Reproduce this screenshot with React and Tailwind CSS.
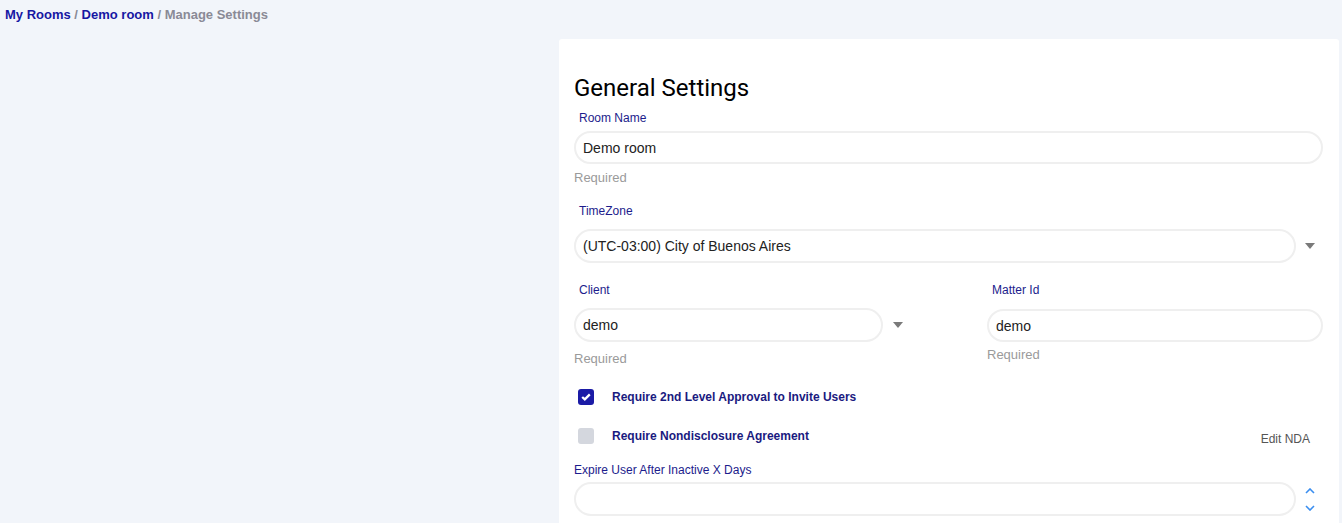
import React from 'react';

const label = "text-[12px] leading-[16px] text-[#1c1c8c]";
const input =
  "rounded-full border-2 border-[#efefef] bg-white px-[7px] text-[14px] text-[#222] outline-none";
const hint = "text-[13px] leading-[18px] text-[#9a9a9a]";

const Caret = () => (
  <svg width="10" height="6" viewBox="0 0 10 6">
    <path d="M0 0 H10 L5 6 Z" fill="#7a7a7a" />
  </svg>
);

const Spinner = () => (
  <div className="flex flex-col items-center gap-[11px]">
    <svg width="10" height="6" viewBox="0 0 10 6" fill="none">
      <path d="M1 5 L5 1 L9 5" stroke="#3a8ef0" strokeWidth="1.6" />
    </svg>
    <svg width="10" height="6" viewBox="0 0 10 6" fill="none">
      <path d="M1 1 L5 5 L9 1" stroke="#3a8ef0" strokeWidth="1.6" />
    </svg>
  </div>
);

export default function App() {
  return (
    <div className="min-h-screen bg-[#f2f5fa] font-['Liberation_Sans',Arial,sans-serif]">
      {/* Breadcrumb */}
      <div className="pl-[5px] pt-[6px] text-[13px] font-bold leading-[18px] text-[#8a8a96]">
        <span className="text-[#1717a3]">My Rooms</span> /{' '}
        <span className="text-[#1717a3]">Demo room</span> / Manage Settings
      </div>

      <div className="flex">
        <div className="w-[559px] shrink-0" />
        <div className="mt-[15px] w-[780px] rounded-[3px] bg-white pb-[20px] pl-[15px] pr-[16px] pt-[35px]">
          <h1 className="font-['Roboto',sans-serif] text-[24px] leading-[28px] text-black">
            General Settings
          </h1>

          {/* Room name */}
          <div className={`${label} mt-[8px] pl-[5px]`}>Room Name</div>
          <input className={`${input} mt-[5px] h-[33px] w-full`} defaultValue="Demo room" />
          <div className={`${hint} mt-[5px]`}>Required</div>

          {/* Time zone */}
          <div className={`${label} mt-[16px] pl-[5px]`}>TimeZone</div>
          <div className="mt-[10px] flex items-center">
            <div className={`${input} flex h-[34px] w-full items-center`}>
              (UTC-03:00) City of Buenos Aires
            </div>
            <div className="flex w-[27px] shrink-0 justify-center">
              <Caret />
            </div>
          </div>

          {/* Client / Matter */}
          <div className="mt-[19px] flex">
            <div className="w-[413px] shrink-0">
              <div className={`${label} pl-[5px]`}>Client</div>
              <div className="mt-[10px] flex items-center">
                <div className={`${input} flex h-[34px] w-[309px] items-center`}>demo</div>
                <div className="flex w-[30px] shrink-0 justify-center">
                  <Caret />
                </div>
              </div>
              <div className={`${hint} mt-[8px]`}>Required</div>
            </div>
            <div className="flex-1">
              <div className={`${label} pl-[5px]`}>Matter Id</div>
              <input className={`${input} mt-[11px] h-[33px] w-full`} defaultValue="demo" />
              <div className={`${hint} mt-[4px]`}>Required</div>
            </div>
          </div>

          {/* Checkboxes */}
          <div className="mt-[21px] flex items-start pl-[4px]">
            <div className="flex h-[16px] w-[16px] items-center justify-center rounded-[3px] bg-[#1b1ba6]">
              <svg width="10" height="8" viewBox="0 0 10 8" fill="none">
                <path d="M1.2 4 L3.8 6.4 L8.8 1.4" stroke="white" strokeWidth="2.3" />
              </svg>
            </div>
            <span className="ml-[18px] text-[12px] font-bold leading-[16px] text-[#1a1a80]">
              Require 2nd Level Approval to Invite Users
            </span>
          </div>
          <div className="mt-[23px] flex items-start pl-[4px]">
            <div className="h-[16px] w-[16px] rounded-[3px] bg-[#d4d7de]" />
            <span className="ml-[18px] text-[12px] font-bold leading-[16px] text-[#1a1a80]">
              Require Nondisclosure Agreement
            </span>
            <span className="ml-auto mr-[13px] mt-[3px] text-[12px] leading-[16px] text-[#555]">
              Edit NDA
            </span>
          </div>

          {/* Expire */}
          <div className={`${label} mt-[15px]`}>Expire User After Inactive X Days</div>
          <div className="mt-[4px] flex items-center">
            <input className={`${input} h-[34px] w-full`} />
            <div className="flex w-[27px] shrink-0 justify-center">
              <Spinner />
            </div>
          </div>
        </div>
      </div>
    </div>
  );
}
